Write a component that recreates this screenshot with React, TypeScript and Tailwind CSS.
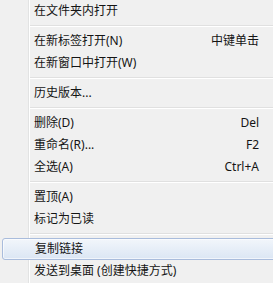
import React from "react";

type Item = { label: string; shortcut?: string; hover?: boolean } | "sep";

const items: Item[] = [
  { label: "在文件夹内打开" },
  "sep",
  { label: "在新标签打开(N)", shortcut: "中键单击" },
  { label: "在新窗口中打开(W)" },
  "sep",
  { label: "历史版本..." },
  "sep",
  { label: "删除(D)", shortcut: "Del" },
  { label: "重命名(R)...", shortcut: "F2" },
  { label: "全选(A)", shortcut: "Ctrl+A" },
  "sep",
  { label: "置顶(A)" },
  { label: "标记为已读" },
  "sep",
  { label: "复制链接", hover: true },
  { label: "发送到桌面 (创建快捷方式)" },
];

export default function App() {
  return (
    <div
      className="w-[273px] h-[283px] overflow-hidden bg-[linear-gradient(to_right,#f0f0f0_28px,#e2e3e3_28px,#e2e3e3_29px,#ffffff_29px,#ffffff_30px,#f0f0f0_30px)] text-[12px] text-[#141414] flex flex-col"
      style={{ fontFamily: '"Segoe UI", "Noto Sans", "Noto Sans CJK SC", sans-serif' }}
    >
      {items.map((it, i) => {
        if (it === "sep") {
          return (
            <div key={i} className="h-[8px] ml-[30px] flex flex-col pt-[3px]">
              <div className="h-px bg-[#e0e0e0]" />
              <div className="h-px bg-white" />
            </div>
          );
        }
        if (it.hover) {
          return (
            <div
              key={i}
              className="h-[22px] shrink-0 ml-[2px] -mr-[6px] rounded-[3px] border border-[#a9bcdc] bg-[linear-gradient(to_bottom,#f2f6fb,#dbe6f4)] shadow-[inset_0_0_0_1px_rgba(255,255,255,0.6)] flex items-center justify-between pl-[32px] pr-[19px] leading-none"
            >
              <span>{it.label}</span>
              {it.shortcut && <span>{it.shortcut}</span>}
            </div>
          );
        }
        return (
          <div
            key={i}
            className="h-[22px] shrink-0 flex items-center justify-between pl-[34px] pr-[14px] leading-none"
          >
            <span>{it.label}</span>
            {it.shortcut && <span>{it.shortcut}</span>}
          </div>
        );
      })}
    </div>
  );
}
